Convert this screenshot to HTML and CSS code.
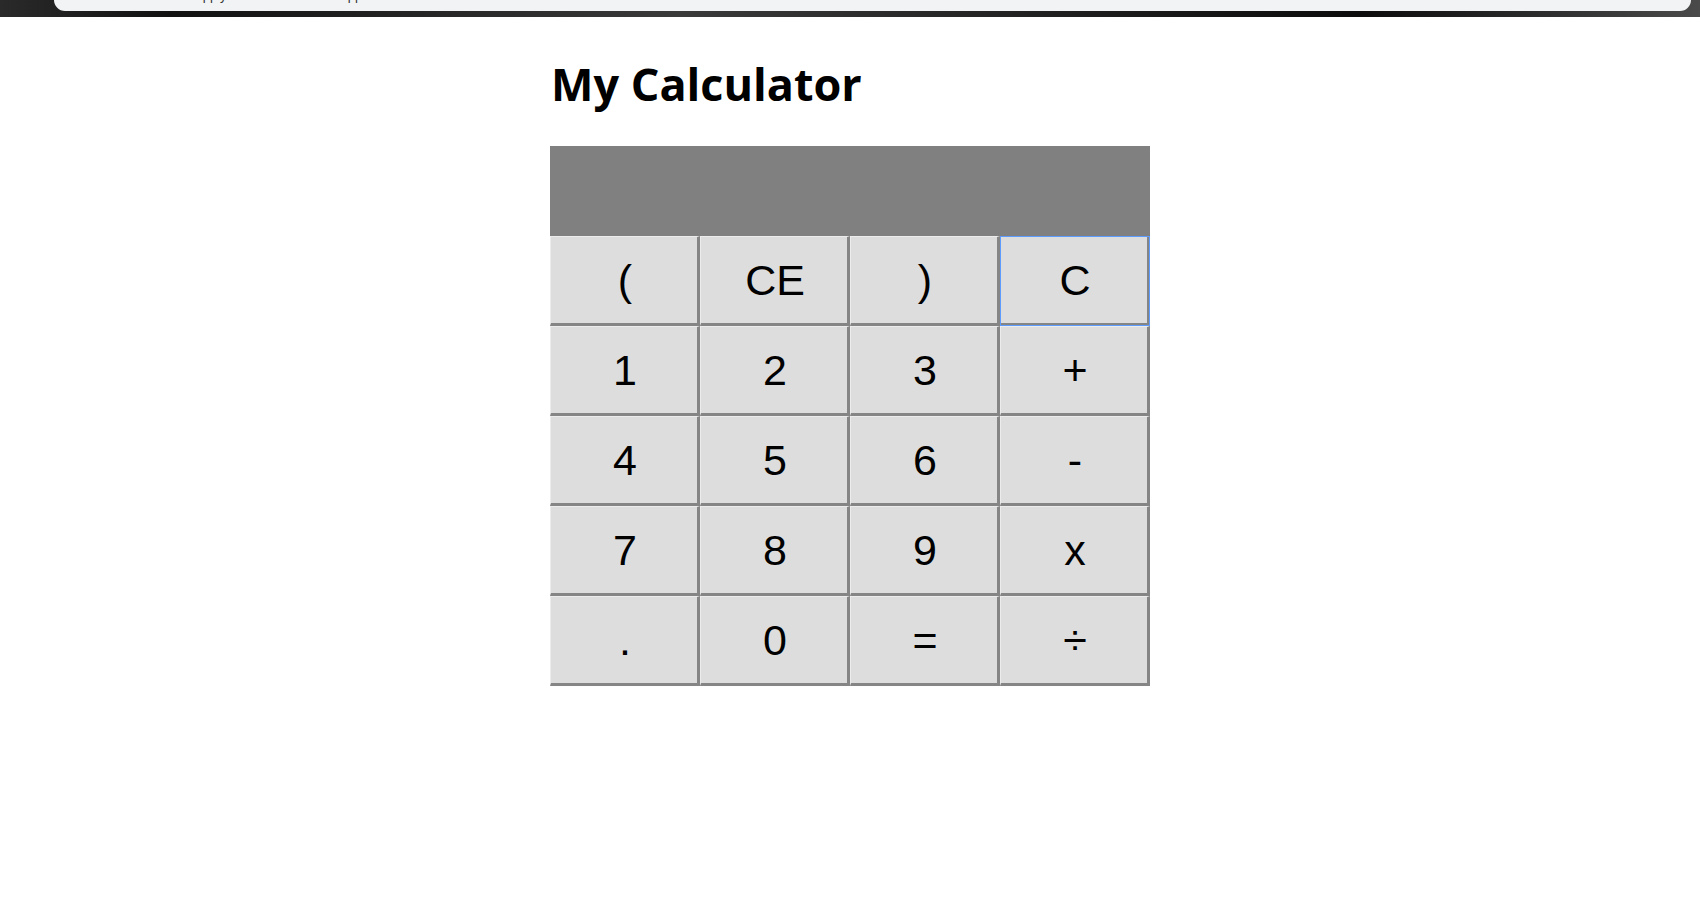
FILE: index.html
```
<!DOCTYPE html>
<html>
<head>
<meta charset="utf-8">
<title>My Calculator</title>
<link rel="stylesheet" href="styles.css">
</head>
<body>
<div class="chrome-strip">
  <div class="chrome-bar"><span class="cut-text t1">Apply</span><span class="cut-text t2">App</span></div>
</div>
<main class="calc-page">
  <h1 class="title">My Calculator</h1>
  <div class="calculator">
    <div class="display"></div>
    <div class="keys">
      <button class="key">(</button>
      <button class="key">CE</button>
      <button class="key">)</button>
      <button class="key focused">C</button>
      <button class="key">1</button>
      <button class="key">2</button>
      <button class="key">3</button>
      <button class="key">+</button>
      <button class="key">4</button>
      <button class="key">5</button>
      <button class="key">6</button>
      <button class="key">-</button>
      <button class="key">7</button>
      <button class="key">8</button>
      <button class="key">9</button>
      <button class="key">x</button>
      <button class="key">.</button>
      <button class="key">0</button>
      <button class="key">=</button>
      <button class="key">÷</button>
    </div>
  </div>
</main>
</body>
</html>
```
FILE: styles.css
```
html, body {
  margin: 0;
  padding: 0;
  background: #ffffff;
}

body {
  font-family: "Liberation Sans", Arial, sans-serif;
}

.chrome-strip {
  height: 17px;
  background: linear-gradient(90deg, #2a2a2a 0%, #111 10%, #3a3a3a 40%, #222 60%, #0c0c0c 80%, #4a4a4a 100%);
  padding: 0 9px 0 54px;
  box-sizing: border-box;
}

.chrome-bar {
  height: 11px;
  background: #f1f3f4;
  border-radius: 0 0 14px 14px;
  position: relative;
  overflow: hidden;
}

.cut-text {
  position: absolute;
  top: -12px;
  font-size: 13px;
  color: #333;
  font-family: "Liberation Sans", Arial, sans-serif;
}

.t1 { left: 140px; }
.t2 { left: 285px; }

.calc-page {
  width: 600px;
  margin: 0 auto;
}

.title {
  font-family: "Open Sans", "Noto Sans", sans-serif;
  font-weight: 700;
  font-size: 45px;
  line-height: 56px;
  margin: 39px 0 34px 1px;
  color: #000;
}

.display {
  height: 90px;
  background: #808080;
}

.keys {
  display: grid;
  grid-template-columns: repeat(4, 150px);
  grid-auto-rows: 90px;
}

.key {
  margin: 0;
  padding: 0 0 0 2px;
  background: #dddddd;
  border-style: solid;
  border-width: 1px 3px 3px 1px;
  border-color: #ececec #858585 #858585 #ececec;
  font-family: "Liberation Sans", Arial, sans-serif;
  font-size: 43px;
  color: #000;
  line-height: 1;
}

.key.focused {
  outline: 1px solid #5e9bff;
  outline-offset: -1px;
}
```
